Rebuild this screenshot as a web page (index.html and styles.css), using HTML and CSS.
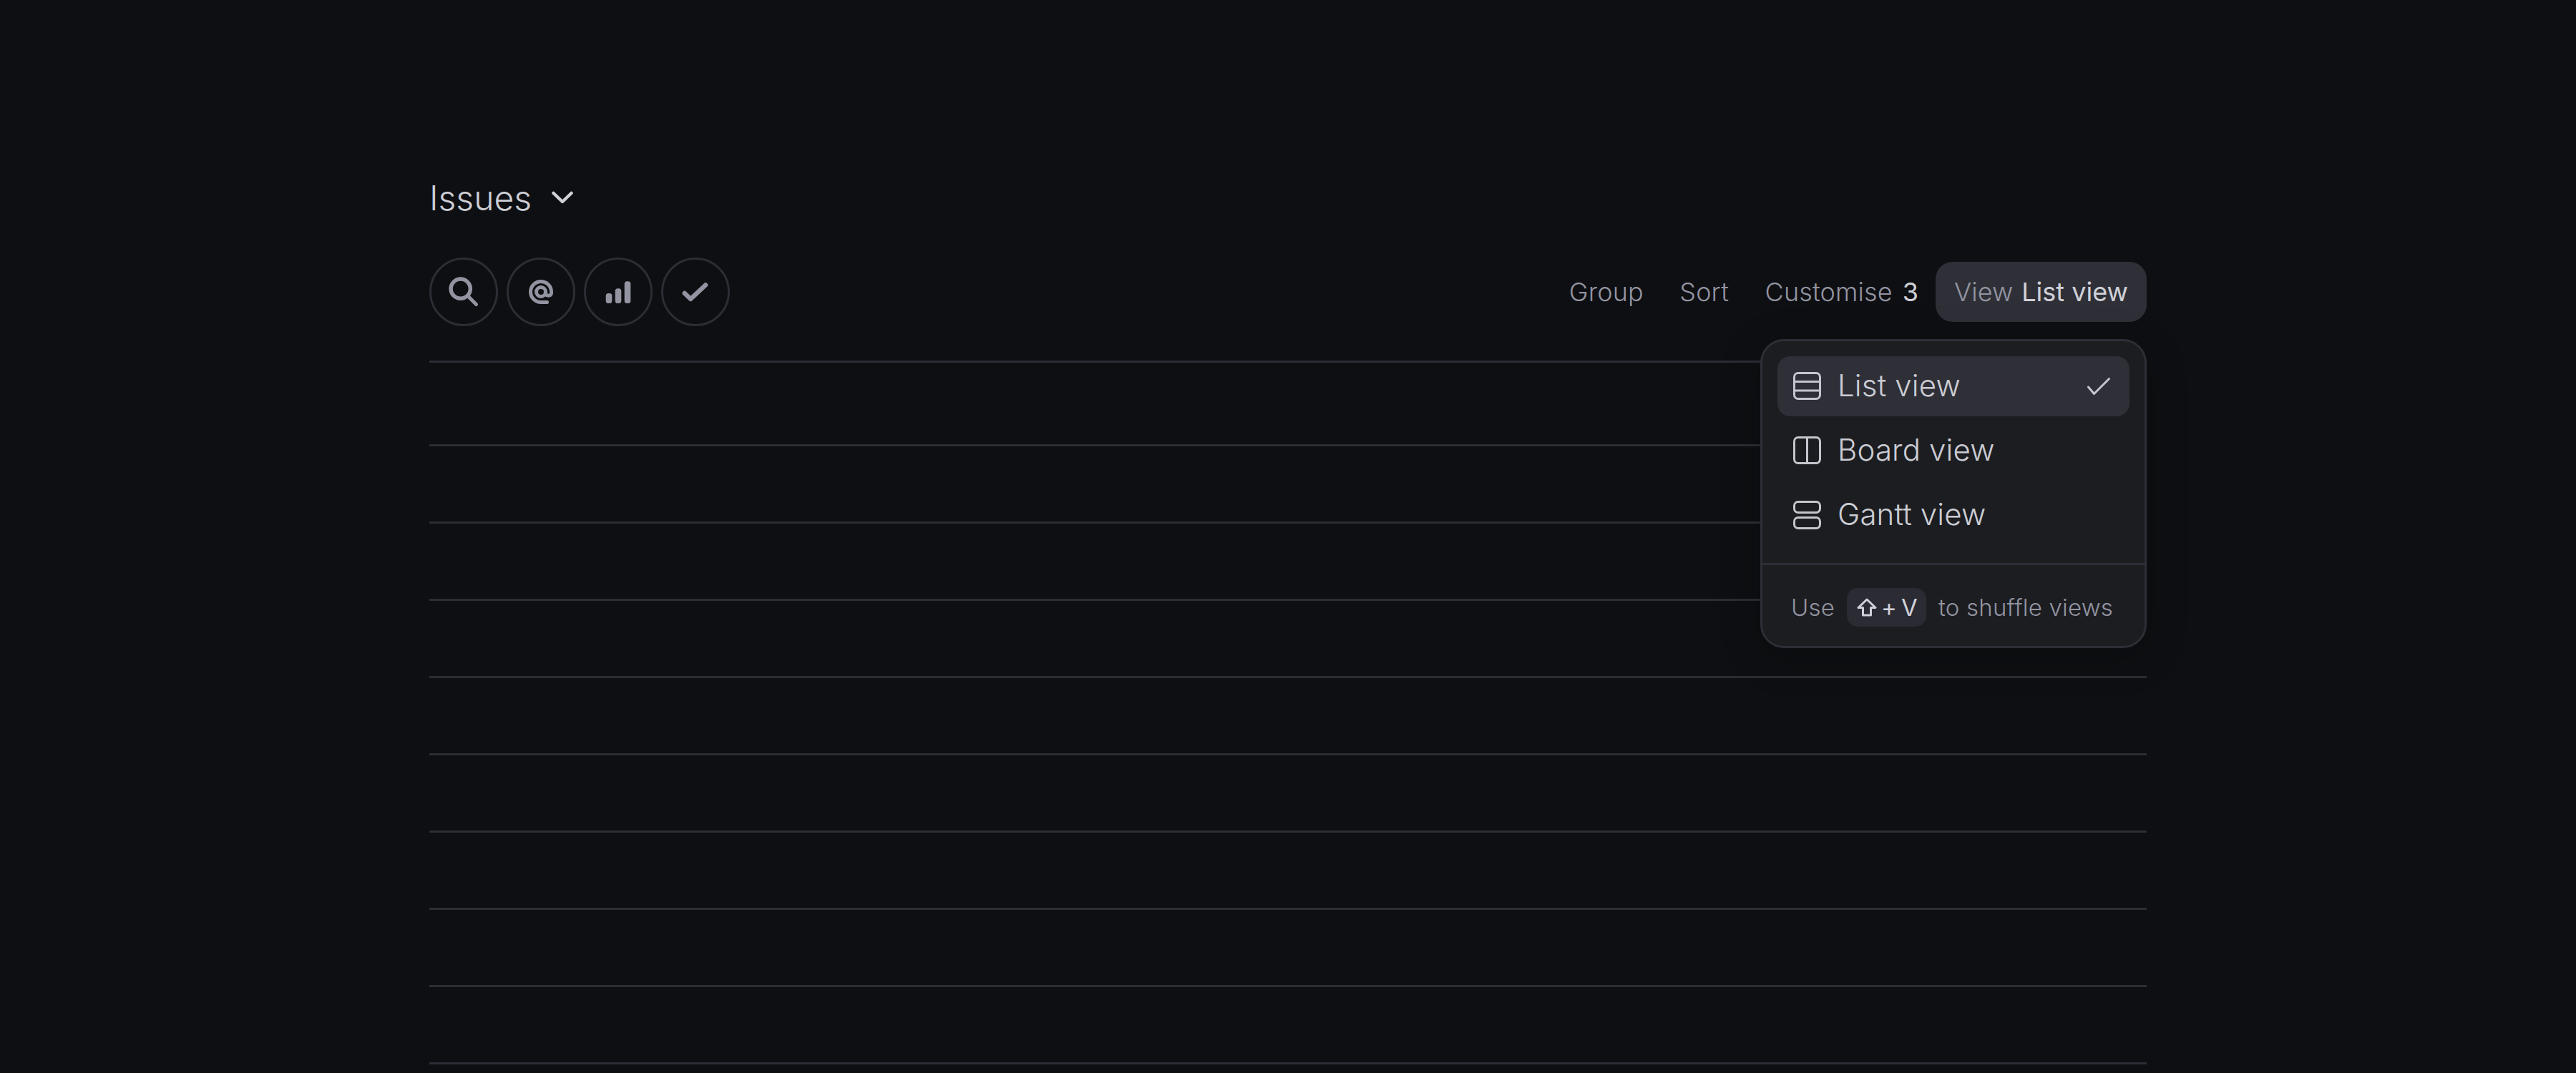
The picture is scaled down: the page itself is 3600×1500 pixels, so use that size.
FILE: index.html
```html
<!DOCTYPE html>
<html lang="en">
<head>
<meta charset="utf-8">
<title>Issues</title>
<link rel="stylesheet" href="styles.css">
</head>
<body>
<main class="page">
  <header class="title-row">
    <h1 class="title">Issues</h1>
    <svg class="chevron" width="30" height="18" viewBox="0 0 30 18"><path d="M2.5 3 15 15 27.5 3"/></svg>
  </header>
  <div class="toolbar">
    <div class="filters">
      <button class="circle"><svg width="90" height="90" viewBox="0 0 90 90"><circle cx="40.7" cy="40.7" r="13.6" class="s6"/><path d="M50.5 50.5 62.5 62.5" class="s5"/></svg></button>
      <button class="circle"><svg width="90" height="90" viewBox="0 0 90 90"><circle cx="45" cy="45" r="6.5" class="s5"/><path d="M53.5 59.5H45A14.5 14.5 0 1 1 59.5 45v2.2a4.2 4.2 0 0 1-8.1 0V45" class="s5"/></svg></button>
      <button class="circle"><svg width="90" height="90" viewBox="0 0 90 90"><rect x="27.7" y="47" width="8.6" height="14" rx="3.6" class="fill"/><rect x="40.7" y="40.3" width="8.6" height="20.7" rx="3.6" class="fill"/><rect x="53.7" y="30.3" width="8.6" height="30.7" rx="3.6" class="fill"/></svg></button>
      <button class="circle"><svg width="90" height="90" viewBox="0 0 90 90"><path d="M29.8 47 38.2 55 59 35.5" class="s7"/></svg></button>
    </div>
    <nav class="actions">
      <span class="action">Group</span>
      <span class="action">Sort</span>
      <span class="action">Customise<b class="count wide">3</b></span>
      <div class="view-wrap">
        <span class="view-btn">View<b class="count">List view</b></span>
        <section class="popover">
          <ul class="menu">
            <li class="item active">
              <svg class="item-icon" width="40" height="40" viewBox="0 0 40 40"><rect x="1.5" y="1.5" width="36" height="36" rx="5.5"/><path d="M1.5 13.5h36M1.5 26h36"/></svg>
              <span class="item-label">List view</span>
              <svg class="tick" width="36" height="30" viewBox="0 0 36 30"><path d="M3.500 16 11.500 25.500 32.500 4.500"/></svg>
            </li>
            <li class="item">
              <svg class="item-icon" width="40" height="40" viewBox="0 0 40 40"><rect x="1.5" y="1.5" width="36" height="36" rx="5.5"/><path d="M19.500 1.500v36"/></svg>
              <span class="item-label">Board view</span>
            </li>
            <li class="item">
              <svg class="item-icon" width="40" height="40" viewBox="0 0 40 40"><rect x="1.5" y="1.500" width="36" height="15" rx="5.500"/><rect x="1.5" y="23.500" width="36" height="15" rx="5.500"/></svg>
              <span class="item-label">Gantt view</span>
            </li>
          </ul>
          <footer class="hint">
            <span>Use</span>
            <kbd class="key"><svg class="shift" width="28" height="26" viewBox="0 0 28 26"><path d="M14 2 26 13.500H19.500V24H8.500V13.500H2Z"/></svg><span class="plus">+</span><span>V</span></kbd>
            <span>to shuffle views</span>
          </footer>
        </section>
      </div>
    </nav>
  </div>
  <div class="rows">
    <div class="row first"></div>
    <div class="row"></div><div class="row"></div><div class="row"></div><div class="row"></div>
    <div class="row"></div><div class="row"></div><div class="row"></div><div class="row"></div>
    <div class="row last"></div>
  </div>
</main>
</body>
</html>
```
FILE: styles.css
```css
* { box-sizing: border-box; }
html, body { margin: 0; height: 100%; overflow: hidden; background: #0e0f12; }
body { font-family: Inter, "Liberation Sans", sans-serif; font-weight: 350; color: #9394a1; }
.page { width: 2400px; margin: 0 auto; padding-top: 246px; }

.title-row { display: flex; align-items: center; height: 60px; gap: 28px; margin-bottom: 54px; }
.title { margin: 0; font-size: 48px; font-weight: 300; line-height: 60px; color: #cdced5; position: relative; top: 1px; }
.chevron { fill: none; stroke: #d0d1d8; stroke-width: 4.5; stroke-linecap: round; stroke-linejoin: round; }

.toolbar { display: flex; justify-content: space-between; align-items: center; height: 96px; margin-bottom: 48px; }
.filters { display: flex; gap: 12px; }
.circle { width: 96px; height: 96px; padding: 0; border: 3px solid #2c2d35; border-radius: 50%; background: none; display: flex; }
.circle svg { display: block; }
.s5, .s6, .s7 { fill: none; stroke: #9394a1; stroke-linecap: round; stroke-linejoin: round; }
.s5 { stroke-width: 5; }
.s6 { stroke-width: 5.500; }
.s7 { stroke-width: 6.500; }
.fill { fill: #9394a1; }

.actions { display: flex; align-items: center; font-size: 36px; line-height: 84px; letter-spacing: .12px; }
.action { padding: 0 24px 0 26.500px; white-space: nowrap; }
.count { font-weight: 400; color: #d0d1d8; margin-left: 12px; }
.count.wide { margin-left: 14px; }
.view-wrap { position: relative; letter-spacing: 0; }
.view-btn { display: block; height: 84px; padding: 0 26px; border-radius: 24px; background: #2f3037; white-space: nowrap; }

.popover { position: absolute; top: 108px; right: 0; width: 540px; border: 3px solid #2d2e36; border-radius: 33px; background: #1c1d21; box-shadow: 0 12px 60px rgba(0, 0, 0, .2); z-index: 2; line-height: normal; }
.menu { list-style: none; margin: 0; padding: 21px 21px 25px; border-bottom: 3px solid #2d2e36; display: flex; flex-direction: column; gap: 6px; }
.item { display: flex; align-items: center; height: 84px; padding: 0 21px 0 22px; border-radius: 18px; font-size: 42px; letter-spacing: .15px; color: #cbccd3; }
.item.active { background: #2f3037; }
.item-icon { fill: none; stroke: #c5c6cd; stroke-width: 3; margin-right: 22px; flex: none; }
.item-label { flex: 1; margin-top: -3px; }
.tick { fill: none; stroke: #c5c6cd; stroke-width: 3; stroke-linecap: round; stroke-linejoin: round; margin-right: 4px; }

.hint { display: flex; align-items: center; gap: 17px; padding: 32px 0 27px 40px; font-size: 33px; letter-spacing: .2px; white-space: nowrap; }
.key { display: flex; align-items: center; height: 54px; padding: 0 12px 0 14px; border-radius: 15px; background: #2a2b33; color: #d0d1d8; font-family: inherit; font-size: 33px; font-weight: 400; }
.shift { fill: none; stroke: #d0d1d8; stroke-width: 3; stroke-linejoin: round; }
.plus { margin: 0 6px; }

.row { height: 108px; border-top: 3px solid #2c2d35; }
.row.first { height: 117px; }
.row.last { height: 15px; }
```
